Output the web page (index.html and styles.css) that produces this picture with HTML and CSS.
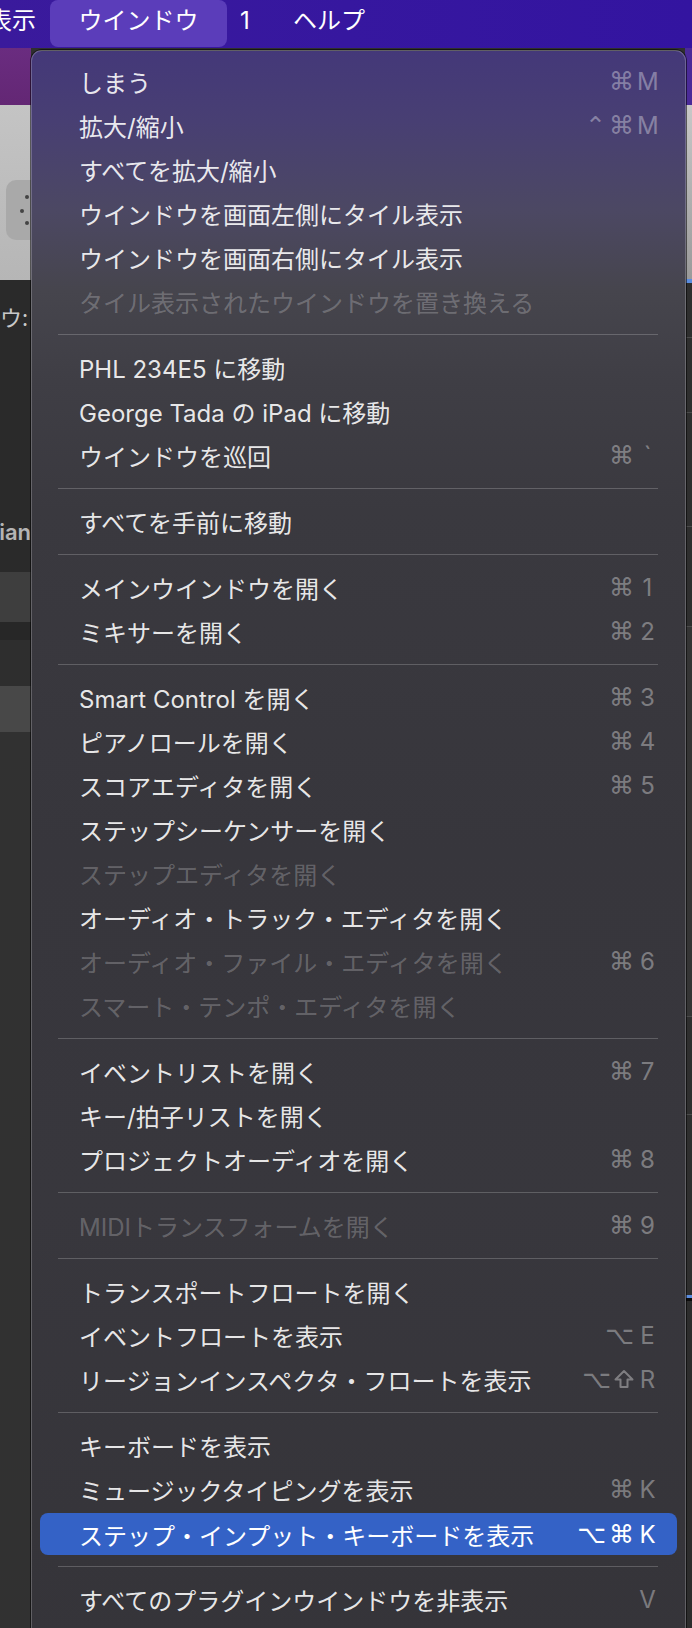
FILE: index.html
```html
<!DOCTYPE html>
<html lang="ja">
<head>
<meta charset="utf-8">
<title>ウインドウ menu</title>
<link rel="stylesheet" href="styles.css">
</head>
<body>
<div class="screen">
  <header class="menubar">
    <span class="mb-item mb-cut">表示</span>
    <span class="mb-item mb-active">ウインドウ</span>
    <span class="mb-item mb-one">1</span>
    <span class="mb-item mb-help">ヘルプ</span>
  </header>

  <div class="desk">
    <div class="strip strip-left">
      <div class="band b-purple"></div>
      <div class="band b-gray">
        <div class="tool-btn">
          <svg width="24" height="60" viewBox="0 0 24 60"><circle cx="21" cy="17" r="2" fill="#444"/><circle cx="16" cy="31" r="2" fill="#444"/><circle cx="21" cy="43" r="2" fill="#444"/></svg>
        </div>
      </div>
      <div class="band b-dark">
        <div class="strip-text t-u">ウ:</div>
        <div class="strip-text t-ian"><span class="ian">Dorian</span></div>
      </div>
      <div class="band b-light"></div>
      <div class="band b-deep"></div>
      <div class="band b-mid"></div>
      <div class="band b-lighter"></div>
      <div class="band b-rest"></div>
    </div>
    <div class="spacer"></div>
    <div class="strip strip-right">
      <div class="rband r-purple"></div>
      <div class="rband r-gray"></div>
      <div class="rband r-blue"></div>
      <div class="rband r-dark r1"></div>
      <div class="rband r-line"></div>
      <div class="rband r-dark r2"></div>
      <div class="rband r-line"></div>
      <div class="rband r-dark r3"></div>
      <div class="rband r-line"></div>
      <div class="rband r-dark r4"></div>
      <div class="rband r-line"></div>
      <div class="rband r-dark r5"></div>
      <div class="rband r-line"></div>
      <div class="rband r-dark r6"></div>
      <div class="rband r-line"></div>
      <div class="rband r-dark r7"></div>
      <div class="rband r-blue2"></div>
      <div class="rband r-black"></div>
      <div class="rband r-dark r8"></div>
    </div>

    <nav class="menu">
      <div class="item"><span class="label">しまう</span><span class="sc"><span class="mods">⌘</span><span class="key">M</span></span></div>
      <div class="item"><span class="label">拡大/縮小</span><span class="sc"><span class="mods">⌃⌘</span><span class="key">M</span></span></div>
      <div class="item"><span class="label">すべてを拡大/縮小</span></div>
      <div class="item"><span class="label">ウインドウを画面左側にタイル表示</span></div>
      <div class="item"><span class="label">ウインドウを画面右側にタイル表示</span></div>
      <div class="item disabled"><span class="label">タイル表示されたウインドウを置き換える</span></div>
      <div class="sep"></div>
      <div class="item"><span class="label">PHL 234E5 に移動</span></div>
      <div class="item"><span class="label">George Tada の iPad に移動</span></div>
      <div class="item"><span class="label">ウインドウを巡回</span><span class="sc"><span class="mods">⌘</span><span class="key">`</span></span></div>
      <div class="sep"></div>
      <div class="item"><span class="label">すべてを手前に移動</span></div>
      <div class="sep"></div>
      <div class="item"><span class="label">メインウインドウを開く</span><span class="sc"><span class="mods">⌘</span><span class="key">1</span></span></div>
      <div class="item"><span class="label">ミキサーを開く</span><span class="sc"><span class="mods">⌘</span><span class="key">2</span></span></div>
      <div class="sep"></div>
      <div class="item"><span class="label">Smart Control を開く</span><span class="sc"><span class="mods">⌘</span><span class="key">3</span></span></div>
      <div class="item"><span class="label">ピアノロールを開く</span><span class="sc"><span class="mods">⌘</span><span class="key">4</span></span></div>
      <div class="item"><span class="label">スコアエディタを開く</span><span class="sc"><span class="mods">⌘</span><span class="key">5</span></span></div>
      <div class="item"><span class="label">ステップシーケンサーを開く</span></div>
      <div class="item disabled"><span class="label">ステップエディタを開く</span></div>
      <div class="item"><span class="label">オーディオ・トラック・エディタを開く</span></div>
      <div class="item disabled"><span class="label">オーディオ・ファイル・エディタを開く</span><span class="sc"><span class="mods">⌘</span><span class="key">6</span></span></div>
      <div class="item disabled"><span class="label">スマート・テンポ・エディタを開く</span></div>
      <div class="sep"></div>
      <div class="item"><span class="label">イベントリストを開く</span><span class="sc"><span class="mods">⌘</span><span class="key">7</span></span></div>
      <div class="item"><span class="label">キー/拍子リストを開く</span></div>
      <div class="item"><span class="label">プロジェクトオーディオを開く</span><span class="sc"><span class="mods">⌘</span><span class="key">8</span></span></div>
      <div class="sep"></div>
      <div class="item disabled"><span class="label">MIDIトランスフォームを開く</span><span class="sc"><span class="mods">⌘</span><span class="key">9</span></span></div>
      <div class="sep"></div>
      <div class="item"><span class="label">トランスポートフロートを開く</span></div>
      <div class="item"><span class="label">イベントフロートを表示</span><span class="sc"><span class="mods">⌥</span><span class="key">E</span></span></div>
      <div class="item"><span class="label">リージョンインスペクタ・フロートを表示</span><span class="sc"><span class="mods">⌥</span><svg class="shift" width="20" height="20" viewBox="0 0 20 20"><path d="M10 2 L18.5 10.5 L13.5 10.5 L13.5 18 L6.5 18 L6.5 10.5 L1.5 10.5 Z" fill="none" stroke="currentColor" stroke-width="2" stroke-linejoin="round"/></svg><span class="key">R</span></span></div>
      <div class="sep"></div>
      <div class="item"><span class="label">キーボードを表示</span></div>
      <div class="item"><span class="label">ミュージックタイピングを表示</span><span class="sc"><span class="mods">⌘</span><span class="key">K</span></span></div>
      <div class="item active"><span class="label">ステップ・インプット・キーボードを表示</span><span class="sc"><span class="mods">⌥⌘</span><span class="key">K</span></span></div>
      <div class="sep"></div>
      <div class="item"><span class="label">すべてのプラグインウインドウを非表示</span><span class="sc"><span class="key">V</span></span></div>
    </nav>
  </div>
</div>
</body>
</html>
```

FILE: styles.css
```css
* { box-sizing: border-box; }
html, body { margin: 0; padding: 0; }
body {
  width: 692px;
  height: 1628px;
  overflow: hidden;
  background: #2f2f2f;
  font-family: Inter, "Noto Sans CJK JP", sans-serif;
}
.screen {
  width: 692px;
  height: 1628px;
  display: flex;
  flex-direction: column;
  overflow: hidden;
}

/* ---------- menu bar ---------- */
.menubar {
  height: 48px;
  flex: none;
  display: flex;
  align-items: flex-start;
  background: linear-gradient(90deg, #3a1a9c 0%, #36179f 50%, #3314a0 100%);
  color: #ffffff;
  font-size: 24px;
  overflow: hidden;
}
.mb-item {
  height: 47px;
  line-height: 42px;
  white-space: nowrap;
}
.mb-cut { margin-left: -12px; width: 48px; }
.mb-active {
  margin-left: 14px;
  width: 177px;
  text-align: center;
  background: #5b3dba;
  border-radius: 8px;
}
.mb-one { margin-left: 8px; width: 20px; text-align: center; }
.mb-help { margin-left: 38px; }

/* ---------- background app ---------- */
.desk {
  position: relative;
  flex: 1;
  display: flex;
}
.strip { display: flex; flex-direction: column; }
.strip-left { width: 31px; flex: none; overflow: hidden; }
.spacer { flex: 1; }
.strip-right { width: 7px; flex: none; }

.band { flex: none; position: relative; }
.b-purple { height: 57px; background: linear-gradient(180deg, #6a2c80, #632774); }
.b-gray { height: 175px; background: linear-gradient(180deg, #c4c4c4, #b6b6b6); padding-top: 75px; }
.tool-btn {
  margin-left: 6px;
  width: 40px;
  height: 60px;
  border-radius: 10px;
  background: #a9a9a9;
}
.tool-btn svg { display: block; }
.b-dark { height: 292px; background: #2a2a2a; padding-top: 22px; }
.strip-text {
  color: #c8c8c8;
  font-size: 22px;
  white-space: nowrap;
  line-height: 28px;
}
.t-u { font-family: "Noto Sans CJK JP", sans-serif; }
.t-ian {
  margin-top: 188px;
  display: flex;
  justify-content: flex-end;
  width: 31px;
}
.ian {
  flex: none;
  font-weight: 600;
  color: #b4b4b4;
}
.b-light { height: 50px; background: #3e3e3e; }
.b-deep { height: 18px; background: #272727; }
.b-mid { height: 46px; background: #2e2e2e; }
.b-lighter { height: 46px; background: #484848; }
.b-rest { flex: 1; background: #313131; }

.rband { flex: none; }
.r-purple { height: 57px; background: #4a2a98; }
.r-gray { height: 174px; background: linear-gradient(180deg, #c8c8c8, #9a9a9a); }
.r-blue { height: 4px; background: #5b8de0; }
.r-dark { background: #2e2e2e; }
.r-line { height: 1px; background: #4a4a4a; }
.r1 { height: 54px; }
.r2 { height: 74px; }
.r3 { height: 113px; }
.r4 { height: 99px; }
.r5 { height: 389px; background: #343434; }
.r6 { height: 97px; }
.r7 { height: 180px; }
.r-blue2 { height: 3px; background: #5b8de0; }
.r-black { height: 3px; background: #0c0c0c; }
.r8 { flex: 1; background: #2c2c2c; }

/* ---------- dropdown menu ---------- */
.menu {
  position: absolute;
  top: 2px;
  left: 31px;
  width: 655px;
  height: 1620px;
  padding: 8px 8px 0 8px;
  border: 1px solid rgba(255, 255, 255, 0.22);
  border-radius: 11px;
  box-shadow: 0 0 0 1px rgba(0, 0, 0, 0.55);
  background: linear-gradient(180deg,
    #443879 0px,
    #483f73 70px,
    #4c4863 160px,
    #46454d 240px,
    #3f3e45 330px,
    #3a393f 460px,
    #37363c 800px,
    #38373d 1150px,
    #353439 1620px);
}
.item {
  height: 44px;
  display: flex;
  align-items: center;
  justify-content: space-between;
  padding: 0 19px 0 39px;
  font-size: 24px;
  color: rgba(255, 255, 255, 0.9);
  white-space: nowrap;
}
.item.disabled .label { color: rgba(255, 255, 255, 0.24); }
.item.active {
  height: 42px;
  margin-top: 2px;
  background: #3462c6;
  border-radius: 8px;
  color: #ffffff;
}
.sc {
  display: flex;
  align-items: center;
  color: rgba(255, 255, 255, 0.36);
}
.item.active .sc { color: #ffffff; }
.mods {
  font-family: "DejaVu Sans", sans-serif;
  font-size: 25px;
  letter-spacing: 3px;
}
.shift {
  display: block;
  margin-right: 3px;
}
.key {
  width: 21px;
  text-align: center;
  font-family: Inter, sans-serif;
  font-size: 24px;
}
.sep {
  height: 22px;
  display: flex;
  align-items: center;
  margin: 0 19px 0 18px;
}
.sep::before {
  content: "";
  flex: 1;
  height: 1px;
  background: rgba(255, 255, 255, 0.2);
}
```
